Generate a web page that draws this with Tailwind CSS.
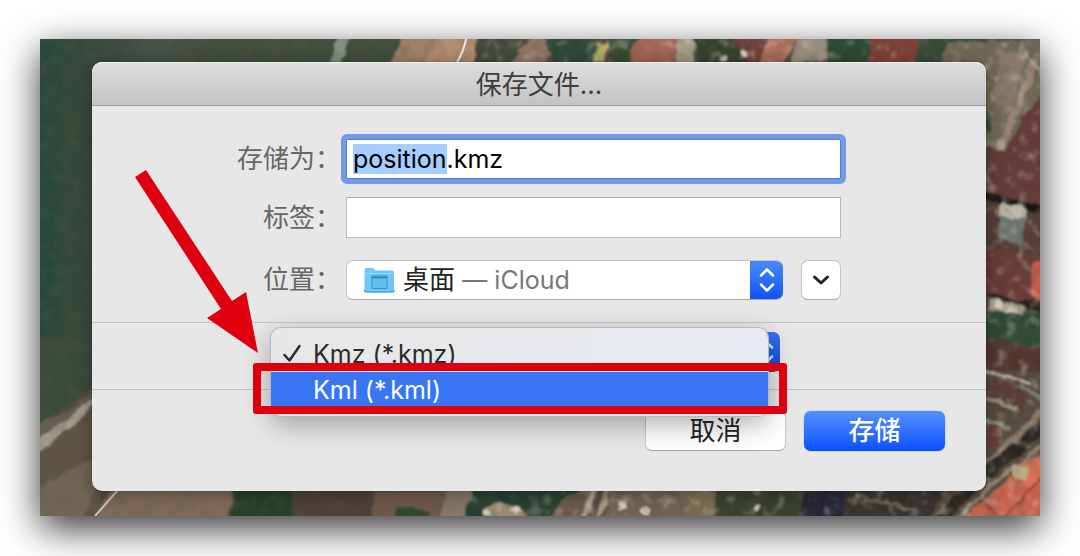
<!DOCTYPE html>
<html lang="zh-CN">
<head>
<meta charset="utf-8">
<meta name="viewport" content="width=device-width, initial-scale=1">
<title>保存文件...</title>
<script src="https://cdn.jsdelivr.net/npm/@tailwindcss/browser@4"></script>
</head>
<body class="min-h-screen bg-white p-10 font-['Inter','Noto_Sans_CJK_SC',sans-serif] text-[25px] leading-9 text-black">
<main class="relative pt-[23px] pr-[54px] pb-[25px] pl-[52px] shadow-[0_12px_36px_rgba(0,0,0,0.8)]">

  <!-- Satellite map -->
  <svg class="absolute inset-0 h-full w-full" viewBox="0 0 1000 476" preserveAspectRatio="none" aria-hidden="true">
    <defs>
      <linearGradient id="sea" x1="0" y1="0" x2="1" y2="0">
        <stop offset="0" stop-color="#244b3a"/><stop offset=".1" stop-color="#34483a"/><stop offset=".3" stop-color="#47534a"/><stop offset=".42" stop-color="#434f3e"/>
      </linearGradient>
      <filter id="soft" x="0" y="0" width="100%" height="100%"><feTurbulence type="fractalNoise" baseFrequency="0.08" numOctaves="3" seed="3" result="n"/><feDisplacementMap in="SourceGraphic" in2="n" scale="7" xChannelSelector="R" yChannelSelector="G"/><feGaussianBlur stdDeviation="1"/></filter>
      <filter id="grain" x="0" y="0" width="100%" height="100%">
        <feTurbulence type="fractalNoise" baseFrequency="0.07" numOctaves="3" seed="7"/>
        <feColorMatrix values="0 0 0 0 0.1  0 0 0 0 0.1  0 0 0 0 0.07  2.6 0 0 0 -1.1"/>
      </filter>
      <filter id="speck" x="0" y="0" width="100%" height="100%">
        <feTurbulence type="fractalNoise" baseFrequency="0.09" numOctaves="2" seed="21"/>
        <feColorMatrix values="0 0 0 0 0.72  0 0 0 0 0.66  0 0 0 0 0.56  0 3 0 0 -1.6"/>
        <feGaussianBlur stdDeviation="0.8"/>
      </filter>
    </defs>
    <rect width="1000" height="476" fill="#564a3f"/>
    <g filter="url(#soft)">
      <path d="M-9 -9H410L350 30H60V330L-9 400Z" fill="url(#sea)"/>
      <path d="M-9 300L60 290V340L-9 396Z" fill="#3b4c3a"/>
      <path d="M-9 388L28 372L60 344V362L-9 415Z" fill="#665f50"/>
      <path d="M-9 406L30 376L60 352V359L28 392L-9 420Z" fill="#a39d8f"/>
      <path d="M-9 418L60 364V485H-9Z" fill="#5e5443"/>
      <path d="M-9 452L56 416V452L40 485H-9Z" fill="#716653"/>
      <path d="M300 -9H314L300 24H291Z" fill="#849386"/>
      <path d="M364 -9H430L418 25H350Z" fill="#a28367"/>
      <path d="M398 -9H440L434 25H385Z" fill="#b58e70"/>
      <path d="M438 -9H486L478 25H434Z" fill="#42493a"/>
      <path d="M478 12L498 -9L512 10L506 25H470Z" fill="#927464"/>
      <path d="M502 -9H560L550 25H514Z" fill="#2e4837"/>
      <path d="M558 4L572 2L564 24H552Z" fill="#b5b168"/>
      <path d="M570 -9H604L594 25H572Z" fill="#344c36"/>
      <path d="M592 4L620 -9H638L636 25H590Z" fill="#a66555"/>
      <path d="M638 -9H656L652 25H636Z" fill="#a49d87"/>
      <path d="M652 -9H716L712 25H658Z" fill="#35432f"/>
      <path d="M688 -9H736L722 25H710Z" fill="#703f3a"/>
      <path d="M732 -9H764L744 25H718Z" fill="#b36f5d"/>
      <path d="M762 -9H786L788 20L750 25Z" fill="#9b907d"/>
      <path d="M788 -9H834L828 25H786Z" fill="#2c4930"/>
      <path d="M833 -9H881L874 25H828Z" fill="#814136"/>
      <path d="M882 -9H946V25H874Z" fill="#344b35"/>
      <path d="M906 4L1009 0V130L940 115V25H900Z" fill="#716a55"/>
      <path d="M962 12L986 16L972 72L950 60Z" fill="#89796a"/>
      <path d="M996 20L960 112" stroke="#9b8574" stroke-width="7"/>
      <path d="M986 12L1009 46" stroke="#b0a59a" stroke-width="2"/>
      <path d="M940 68L953 78L950 92H940Z" fill="#2e4b35"/>
      <path d="M984 74L1009 50V172L940 152V105L966 112Z" fill="#633b37"/>
      <path d="M940 151L1009 168V176L940 160Z" fill="#1e1918"/>
      <path d="M940 160L1009 176V258L940 240Z" fill="#573e37"/>
      <path d="M962 163L987 170L982 207L958 198Z" fill="#6e7770"/>
      <path d="M962 163L987 170L984 180L960 176Z" fill="#bcb5a8"/>
      <path d="M940 208L1009 220V262H940Z" fill="#693b34"/>
      <path d="M991 226L1009 216V262L992 258Z" fill="#c7594b"/>
      <path d="M940 254L1009 264V273L940 261Z" fill="#271e1b"/>
      <path d="M950 260L984 266L980 276L948 270Z" fill="#aca492"/>
      <path d="M940 272L1009 274V312L940 300Z" fill="#2f4a36"/>
      <path d="M940 296L1009 310V332L940 330Z" fill="#53362f"/>
      <path d="M940 331L992 343" stroke="#bba99d" stroke-width="3"/>
      <path d="M940 336L990 348L982 375L940 362Z" fill="#593c35"/>
      <path d="M980 345L1009 364" stroke="#777b78" stroke-width="5"/>
      <path d="M940 356L976 368M940 378L970 388" stroke="#8b8e74" stroke-width="4"/>
      <path d="M950 385L962 392L956 410L940 402Z" fill="#693e37"/>
      <path d="M1009 364L920 452L890 485" fill="none" stroke="#8e7b68" stroke-width="6"/>
      <path d="M1009 382L930 446L896 485" fill="none" stroke="#292524" stroke-width="13"/>
      <path d="M1009 400L946 450L912 485" fill="none" stroke="#978978" stroke-width="4"/>
      <path d="M1009 408V485H915L964 442Z" fill="#c7644e"/>
      <path d="M976 424L1009 412V440L980 446Z" fill="#dd7058"/>
      <path d="M972 424L990 426L986 440L972 436Z" fill="#b6ac84"/>
      <path d="M955 485L1009 430M936 456L966 480" stroke="#8c4237" stroke-width="2"/>
      <path d="M74 445H196L186 485H50Z" fill="#816a58"/>
      <path d="M194 445H250L258 485H190Z" fill="#263f2c"/>
      <path d="M250 445H350L338 485H256Z" fill="#4e4038"/>
      <path d="M336 445H412L400 485H330Z" fill="#71594a"/>
      <path d="M358 466L390 472L384 485H350Z" fill="#32472f"/>
      <path d="M408 445H436L426 485H398Z" fill="#877867"/>
      <path d="M432 445H546L510 485H424Z" fill="#253f30"/>
      <path d="M444 468L458 462L480 468L494 485H446Z" fill="#978a70"/>
      <path d="M520 462L552 445L546 485H506Z" fill="#6c5b4c"/>
      <path d="M572 445H642L650 485H562Z" fill="#706253"/>
      <path d="M556 445L542 485M570 445L554 485" stroke="#a7977e" stroke-width="5"/>
      <path d="M636 445H678L676 485H650Z" fill="#7d6c53"/>
      <path d="M676 445H770L758 485H674Z" fill="#39402d"/>
      <path d="M764 445H810L806 485H760Z" fill="#262839"/>
      <path d="M806 445H910L884 485H800Z" fill="#37322f"/>
      <path d="M814 456L876 470" stroke="#6d6357" stroke-width="3"/>
      <g fill="#d9d1bf">
        <ellipse cx="447" cy="472" rx="4" ry="3"/><ellipse cx="475" cy="470" rx="5" ry="3"/><ellipse cx="582" cy="466" rx="4" ry="4"/><ellipse cx="606" cy="471" rx="5" ry="4"/>
        <ellipse cx="704" cy="14" rx="4" ry="3"/><ellipse cx="683" cy="18" rx="3" ry="3"/><ellipse cx="716" cy="468" rx="3" ry="3"/><ellipse cx="958" cy="264" rx="4" ry="4"/><ellipse cx="972" cy="270" rx="4" ry="4"/>
      </g>
    </g>
    <rect width="1000" height="476" filter="url(#grain)" opacity=".28"/>
    <rect x="430" width="570" height="476" filter="url(#speck)" opacity=".4"/>
    <path d="M426 0Q424 12 416 25" fill="none" stroke="#f2e9df" stroke-width="2"/>
    <path d="M78 450L55 476" stroke="#cbc6bb" stroke-width="2"/>
  </svg>

  <form class="relative rounded-[10px] bg-[#e7e7e7] shadow-[0_0_1px_rgba(0,0,0,0.6),0_2px_18px_rgba(0,0,0,0.35)]" onsubmit="return false">
    <h1 class="flex h-11 items-center justify-center rounded-t-[10px] border-b border-[#9d9d9d] bg-linear-to-b from-[#dedede] to-[#c3c3c3] pt-[3px] text-[26px] text-[#3e3e3e] shadow-[inset_0_1px_0_#f2f2f2]">保存文件...</h1>

    <div class="grid grid-cols-[249px_1fr] items-center gap-x-[5px] gap-y-[18px] pt-[33px] pr-[145px] pb-[22px] text-[26px]">
      <label for="name" class="text-right text-[#666]">存储为：</label>
      <input id="name" type="text" value="position.kmz" class="h-10 w-full border border-[#4f7cd8] bg-white px-1.5 text-[25px] outline-[5px] outline-[#7399eb] selection:bg-[#a5cdff] selection:text-black rounded-[1px]">
      <label for="tags" class="text-right text-[#666]">标签：</label>
      <input id="tags" type="text" class="h-[41px] w-full border border-[#b9b9b9] border-t-[#aaa] bg-white px-1.5 text-[25px] outline-none">
      <label for="place" class="mt-1 text-right text-[#666]">位置：</label>
      <div class="mt-1 flex gap-[18px]">
        <button id="place" type="button" aria-haspopup="listbox" class="relative flex h-10 min-w-0 flex-1 items-center overflow-hidden rounded-[7px] border border-r-0 border-[#c4c4c4] border-b-[#a8a8a8] bg-white pl-4">
          <svg class="mr-2 h-7 w-8 shrink-0" viewBox="0 0 32 28" aria-hidden="true">
            <path d="M1.500 4Q1.500 2 3.500 2H9.500Q11 2 11.500 3.500L12 4.500H29Q31 4.500 31 6.500V24Q31 26 29 26H3.500Q1.500 26 1.500 24Z" fill="#6bc9fa"/>
            <path d="M2 7.500H31" stroke="#8cdafc" stroke-width="1"/>
            <path d="M1.500 24Q1.500 26 3.500 26H29Q31 26 31 24" fill="none" stroke="#4ba5d5" stroke-width="1.500"/>
            <path d="M9 10H24V22.500H9Z" fill="#62bff0" stroke="#3e8fc0"/><path d="M9 11.500H24" stroke="#2f83b8" stroke-width="1.500"/>
          </svg>
          <span class="truncate text-[26px] text-[#222]">桌面 <span class="text-[25px] text-[#777]">— iCloud</span></span>
          <span class="-my-px ml-auto flex h-10 w-[33px] shrink-0 items-center justify-center bg-linear-to-b from-[#4a8bfa] to-[#0d50fa]">
            <svg class="h-7 w-5" viewBox="0 0 20 28" fill="none" stroke="#fff" stroke-width="2.500" stroke-linecap="round" stroke-linejoin="round" aria-hidden="true"><path d="M4 9.500L10 3.500L16 9.500M4 18.500L10 24.500L16 18.500"/></svg>
          </span>
        </button>
        <button type="button" aria-label="展开" class="flex h-10 w-10 shrink-0 items-center justify-center rounded-[7px] border border-[#c4c4c4] border-b-[#a8a8a8] bg-white">
          <svg class="h-5 w-5" viewBox="0 0 20 20" fill="none" stroke="#222" stroke-width="3" stroke-linecap="round" stroke-linejoin="round" aria-hidden="true"><path d="M3.500 7L10 13L16.500 7"/></svg>
        </button>
      </div>
    </div>

    <div class="border-y border-[#c3c3c3] pt-[9px] pr-[206px] pb-[17px] pl-[183px]">
      <div class="relative z-10">
        <select aria-label="文件格式" class="block h-10 w-full appearance-none rounded-[7px] bg-white bg-linear-to-b from-[#3475ee] to-[#0a46e0] px-3 text-transparent">
          <option>Kmz (*.kmz)</option>
          <option>Kml (*.kml)</option>
        </select>
        <svg class="pointer-events-none absolute top-1.5 right-1 h-7 w-5" viewBox="0 0 20 28" fill="none" stroke="#d8e4ff" stroke-width="2.500" stroke-linecap="round" stroke-linejoin="round" aria-hidden="true"><path d="M4 9.500L10 3.500L16 9.500M4 18.500L10 24.500L16 18.500"/></svg>

        <!-- Open format menu -->
        <div role="listbox" aria-label="文件格式" class="absolute -top-1 right-3 -left-1 rounded-[10px] bg-linear-to-r from-[#e7e7e7] to-[#e7ebf1] py-2 shadow-[0_0_0_1px_#b9b9b9,0_8px_28px_rgba(0,0,0,0.32)]">
          <button type="button" role="option" aria-selected="true" class="flex h-9 w-full items-center text-[#2b2b2b]">
            <svg class="mr-2 ml-2.5 h-6 w-6" viewBox="0 0 24 24" fill="none" stroke="#2b2b2b" stroke-width="2.500" stroke-linecap="round" stroke-linejoin="round" aria-hidden="true"><path d="M3.500 13L8.500 18.500L18.500 4"/></svg>
            Kmz (*.kmz)
          </button>
          <button type="button" role="option" aria-selected="false" class="flex h-9 w-full items-center bg-[#3876f6] pl-[42px] text-white">Kml (*.kml)</button>
        </div>

        <!-- Highlight frame -->
        <div class="pointer-events-none absolute top-[31px] -right-[7px] -left-[22px] h-[51px] rounded-[3px] border-8 border-[#df000f]"></div>
      </div>
    </div>

    <div class="flex justify-end gap-[18px] pt-[21px] pr-[41px] pb-10 text-[26px]">
      <button type="button" class="h-10 w-[141px] rounded-[7px] border border-[#c4c4c4] border-b-[#a8a8a8] bg-white text-[#222]">取消</button>
      <button type="submit" class="h-10 w-[141px] rounded-[7px] bg-linear-to-b from-[#5590fa] to-[#0a4dff] font-medium text-white shadow-[0_0_1px_#0a46d8]">存储</button>
    </div>

    <!-- Pointer arrow -->
    <svg class="pointer-events-none absolute top-[108px] left-[43px] z-20 h-[184px] w-[124px]" viewBox="0 0 124 184" aria-hidden="true">
      <path d="M0 7L11 0L97 131L111 122L123 183L72 148L86 139Z" fill="#df000f"/>
    </svg>
  </form>
</main>
<script>
  const nameField = document.getElementById('name');
  nameField.focus();
  nameField.setSelectionRange(0, 'position'.length);
</script>
</body>
</html>
